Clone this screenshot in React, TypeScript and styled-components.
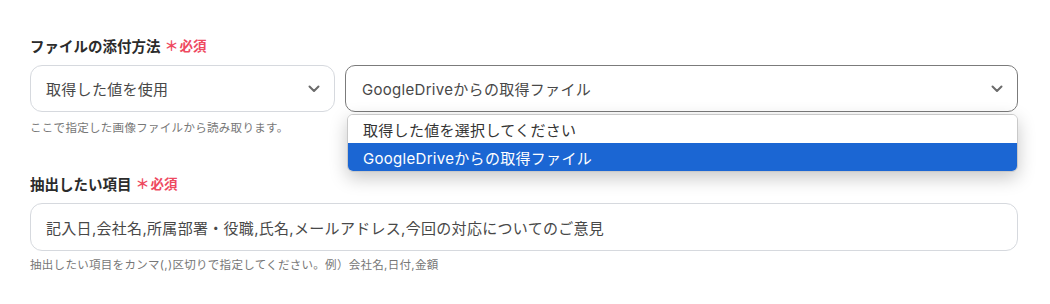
import React from "react";
import styled, { createGlobalStyle } from "styled-components";

const GlobalStyle = createGlobalStyle`
  html, body {
    margin: 0;
    padding: 0;
    background: #fff;
  }
  body {
    font-family: "Inter", "Noto Sans CJK JP", "Noto Sans", sans-serif;
    color: #333;
  }
`;

const Page = styled.div`
  width: 988px;
  padding: 35px 32px 0 30px;
`;

const Field = styled.div<{ $gap?: number }>`
  display: flex;
  flex-direction: column;
  margin-top: ${(p) => p.$gap ?? 0}px;
`;

const Label = styled.div`
  display: flex;
  align-items: center;
  height: 20px;
  font-size: 14.5px;
  font-weight: 700;
  color: #2b2b2b;
`;

const Required = styled.span`
  display: inline-flex;
  align-items: center;
  margin-left: 4px;
  color: #ee4a5f;
  font-size: 13.5px;
  font-weight: 700;

  &::before {
    content: "＊";
    font-size: 14px;
    margin-right: 1px;
  }
`;

const SelectRow = styled.div`
  display: grid;
  grid-template-columns: 305px 1fr;
  gap: 10px;
  margin-top: 10px;
`;

const SelectWrap = styled.div`
  position: relative;
`;

const SelectBox = styled.div<{ $focused?: boolean }>`
  box-sizing: border-box;
  height: 47px;
  display: flex;
  align-items: center;
  justify-content: space-between;
  padding: 0 14px 0 ${(p) => (p.$focused ? 16 : 15)}px;
  border: 1px solid ${(p) => (p.$focused ? "#7b7b7b" : "#d6d9de")};
  border-radius: ${(p) => (p.$focused ? 10 : 12)}px;
  background: #fff;
  font-size: 15px;
  letter-spacing: 0.3px;
  color: #484848;
`;

const Chevron = () => (
  <svg width="12" height="8" viewBox="0 0 12 8" fill="none">
    <path d="M1.5 1.5 6 6l4.5-4.5" stroke="#6b6b6b" strokeWidth="2" strokeLinecap="round" strokeLinejoin="round" />
  </svg>
);

const Menu = styled.ul`
  position: absolute;
  top: calc(100% + 2px);
  left: 2px;
  right: 0;
  margin: 0;
  padding: 0;
  list-style: none;
  background: #fff;
  border: 1px solid #c9c9c9;
  border-radius: 6px;
  overflow: hidden;
  box-shadow: 0 6px 18px rgba(0, 0, 0, 0.22);
  z-index: 2;
`;

const Option = styled.li<{ $active?: boolean }>`
  height: 28px;
  display: flex;
  align-items: center;
  padding-left: 15px;
  font-size: 15px;
  letter-spacing: 0.3px;
  color: ${(p) => (p.$active ? "#fff" : "#333")};
  background: ${(p) => (p.$active ? "#1b66d3" : "#fff")};
`;

const Help = styled.div<{ $top: number }>`
  margin-top: ${(p) => p.$top}px;
  height: 16px;
  line-height: 16px;
  font-size: 11.5px;
  letter-spacing: 0.3px;
  color: #777;
`;

const TextInput = styled.div`
  box-sizing: border-box;
  height: 48px;
  margin-top: 10px;
  display: flex;
  align-items: center;
  padding-left: 15px;
  border: 1px solid #d6d9de;
  border-radius: 12px;
  font-size: 15px;
  letter-spacing: 0.3px;
  color: #484848;
`;

export default function App() {
  return (
    <>
      <GlobalStyle />
      <Page>
        <Field>
          <Label>
            ファイルの添付方法<Required>必須</Required>
          </Label>
          <SelectRow>
            <SelectBox>
              取得した値を使用
              <Chevron />
            </SelectBox>
            <SelectWrap>
              <SelectBox $focused>
                GoogleDriveからの取得ファイル
                <Chevron />
              </SelectBox>
              <Menu>
                <Option>取得した値を選択してください</Option>
                <Option $active>GoogleDriveからの取得ファイル</Option>
              </Menu>
            </SelectWrap>
          </SelectRow>
          <Help $top={8}>ここで指定した画像ファイルから読み取ります。</Help>
        </Field>
        <Field $gap={37}>
          <Label>
            抽出したい項目<Required>必須</Required>
          </Label>
          <TextInput>記入日,会社名,所属部署・役職,氏名,メールアドレス,今回の対応についてのご意見</TextInput>
          <Help $top={6}>抽出したい項目をカンマ(,)区切りで指定してください。例）会社名,日付,金額</Help>
        </Field>
      </Page>
    </>
  );
}
